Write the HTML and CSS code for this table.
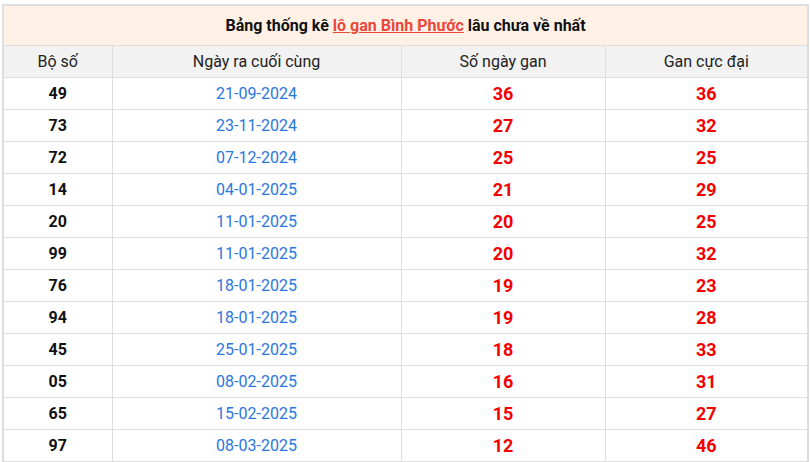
FILE: index.html
```html
<!DOCTYPE html>
<html>
<head>
<meta charset="utf-8">
<link rel="stylesheet" href="styles.css">
</head>
<body>
<table class="gan">
  <colgroup>
    <col class="c1"><col class="c2"><col class="c3"><col class="c4">
  </colgroup>
  <thead>
    <tr><th colspan="4" class="title">Bảng thống kê <a href="#" class="lnk">lô gan Bình Phước</a> lâu chưa về nhất</th></tr>
    <tr class="head"><th>Bộ số</th><th>Ngày ra cuối cùng</th><th>Số ngày gan</th><th>Gan cực đại</th></tr>
  </thead>
  <tbody>
    <tr><td class="num">49</td><td class="date">21-09-2024</td><td class="red">36</td><td class="red">36</td></tr>
    <tr><td class="num">73</td><td class="date">23-11-2024</td><td class="red">27</td><td class="red">32</td></tr>
    <tr><td class="num">72</td><td class="date">07-12-2024</td><td class="red">25</td><td class="red">25</td></tr>
    <tr><td class="num">14</td><td class="date">04-01-2025</td><td class="red">21</td><td class="red">29</td></tr>
    <tr><td class="num">20</td><td class="date">11-01-2025</td><td class="red">20</td><td class="red">25</td></tr>
    <tr><td class="num">99</td><td class="date">11-01-2025</td><td class="red">20</td><td class="red">32</td></tr>
    <tr><td class="num">76</td><td class="date">18-01-2025</td><td class="red">19</td><td class="red">23</td></tr>
    <tr><td class="num">94</td><td class="date">18-01-2025</td><td class="red">19</td><td class="red">28</td></tr>
    <tr><td class="num">45</td><td class="date">25-01-2025</td><td class="red">18</td><td class="red">33</td></tr>
    <tr><td class="num">05</td><td class="date">08-02-2025</td><td class="red">16</td><td class="red">31</td></tr>
    <tr><td class="num">65</td><td class="date">15-02-2025</td><td class="red">15</td><td class="red">27</td></tr>
    <tr><td class="num">97</td><td class="date">08-03-2025</td><td class="red">12</td><td class="red">46</td></tr>
  </tbody>
</table>
</body>
</html>
```
FILE: styles.css
```css
html, body {
  margin: 0;
  padding: 0;
  background: #fff;
  font-family: Roboto, "Liberation Sans", Arial, sans-serif;
}
body {
  padding: 4px 3px 0 2px;
}
.gan {
  width: 805px;
  border-collapse: collapse;
  table-layout: fixed;
  border: 2px solid #dedede;
}
.c1 { width: 109px; }
.c2 { width: 289px; }
.c3 { width: 204px; }
.c4 { width: 203px; }
.gan th, .gan td {
  border: 1px solid #dedede;
  text-align: center;
  padding: 0;
}
.title {
  height: 39px;
  background: #fff1e6;
  font-size: 16px;
  font-weight: 700;
  color: #111;
}
.lnk {
  color: #e8493a;
  text-decoration: underline;
}
.head th {
  height: 31px;
  background: #f2f2f2;
  font-weight: 400;
  font-size: 16px;
  color: #222;
}
.gan td {
  height: 31px;
}
.num {
  font-weight: 700;
  font-size: 16px;
  color: #111;
}
.date {
  font-size: 16px;
  color: #2a77e0;
}
.red {
  font-weight: 700;
  font-size: 18px;
  color: #f40000;
}
```
